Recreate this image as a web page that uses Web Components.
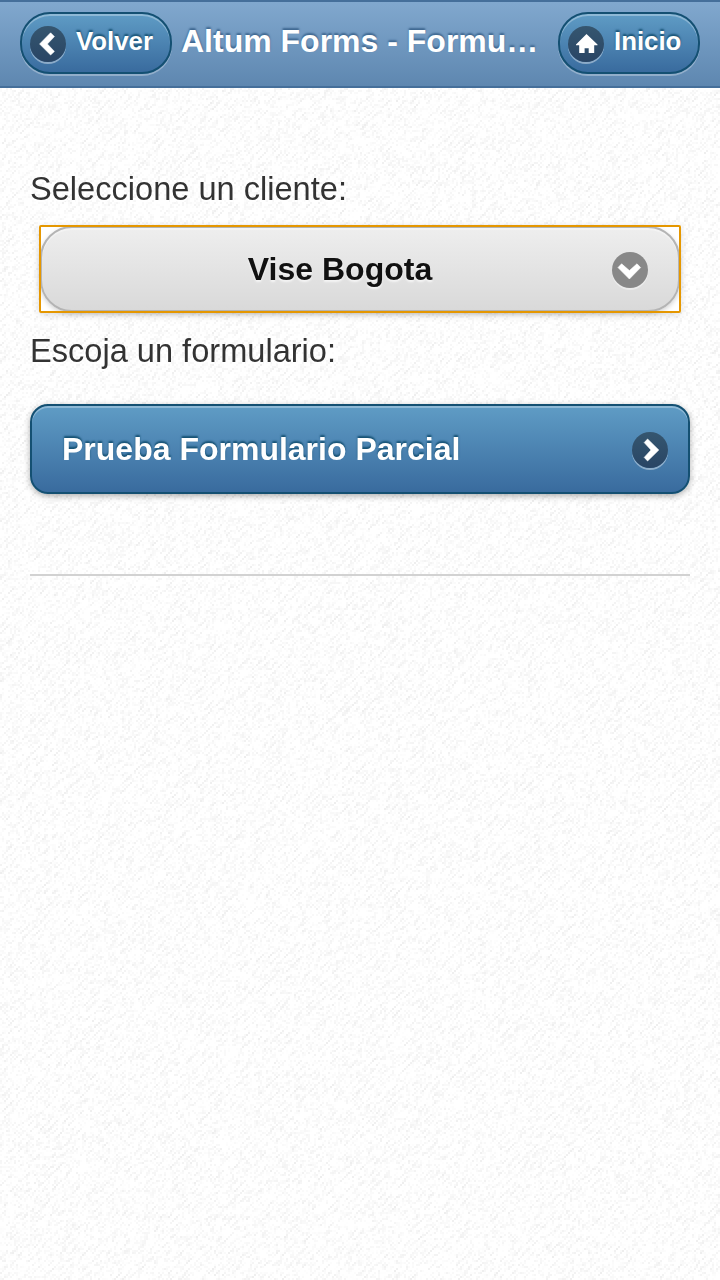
<!DOCTYPE html>
<html lang="es">
<head>
<meta charset="utf-8">
<title>Altum Forms</title>
<style>
html,body{margin:0;height:100%;overflow:hidden;background:#fdfdfd}
body{font-family:"Liberation Sans",Arial,sans-serif}
</style>
</head>
<body>
<paper-page>
  <title-bar slot="header">
    <nav-button slot="start" icon="left" style="width:152px">Volver</nav-button>
    Altum Forms - Formu…
    <nav-button slot="end" icon="home" style="width:142px">Inicio</nav-button>
  </title-bar>
  <field-label>Seleccione un cliente:</field-label>
  <select-button>Vise Bogota</select-button>
  <field-label>Escoja un formulario:</field-label>
  <list-link>Prueba Formulario Parcial</list-link>
  <rule-line></rule-line>
</paper-page>
<script>
const define = (name, html, ready) => {
  const t = document.createElement('template');
  t.innerHTML = html;
  customElements.define(name, class extends HTMLElement {
    constructor() {
      super();
      this.attachShadow({mode: 'open'}).append(t.content.cloneNode(true));
    }
    connectedCallback() { if (ready) ready(this); }
  });
};

const GLYPHS = {
  left: '<path d="M20.6 6.8 L24.4 10.6 L17.4 18 L24.4 25.4 L20.6 29 L9.6 18 Z" fill="#fff" stroke="#fff" stroke-width=".6" stroke-linejoin="round"/>',
  right: '<path d="M15.6 7 L12.2 10.6 L19 18 L12.2 25.4 L15.6 29 L26.8 18 Z" fill="#fff" stroke="#fff" stroke-width=".6" stroke-linejoin="round"/>',
  down: '<path d="M6 15.6 L9.6 11.8 L17.4 18.6 L25 11.8 L28.6 15.6 L17.4 27 Z" fill="#fff" stroke="#fff" stroke-width=".6" stroke-linejoin="round"/>',
  home: '<path d="M18.5 8 L29.5 18.6 V19.3 H26.2 V27 H20.7 V22.2 H16.6 V27 H11.2 V19.3 H8 V18.6 Z" fill="#fff"/>'
};

define('disc-icon', `
<style>
:host{display:block;flex:none;width:36px;height:36px;border-radius:50%;background:var(--disc,rgba(0,0,0,.4));box-shadow:0 2px 0 rgba(255,255,255,.4)}
svg{display:block}
</style>
<svg width="36" height="36" viewBox="0 0 36 36"></svg>`, el => {
  const name = el.getAttribute('name');
  if (name) el.shadowRoot.querySelector('svg').innerHTML = GLYPHS[name];
});

define('nav-button', `
<style>
:host{display:flex;box-sizing:border-box;height:62px;border:2px solid #145072;border-radius:30px;padding:10px 0 0 8px;
 background:linear-gradient(#5f9cc5,#396b9e);box-shadow:inset 0 2px 0 rgba(255,255,255,.3),0 2px 0 rgba(255,255,255,.3);
 color:#fff;font-size:25.8px;line-height:30px;font-weight:bold;text-shadow:0 -2px 2px #145072}
disc-icon{margin:2px 10px 0 0;--disc:linear-gradient(#35566f,#294565)}
span{padding-top:2px}
</style>
<disc-icon></disc-icon><span><slot></slot></span>`, el => {
  const i = el.shadowRoot.querySelector('disc-icon');
  i.setAttribute('name', el.getAttribute('icon'));
  i.shadowRoot.querySelector('svg').innerHTML = GLYPHS[el.getAttribute('icon')];
});

define('title-bar', `
<style>
:host{display:flex;box-sizing:border-box;height:88px;padding:10px 20px;border:solid #456f9a;border-width:2px 0;
 background:linear-gradient(#81a8ce,#5e87b0);align-items:flex-start}
h1{flex:1;margin:9px 0 0 9px;font-size:32px;line-height:40px;color:#fff;white-space:nowrap;text-shadow:0 -2px 2px #3e6790}
</style>
<slot name="start"></slot><h1><slot></slot></h1><slot name="end"></slot>`);

define('field-label', `
<style>:host{display:block;height:42px;line-height:42px;font-size:32.6px;color:#333;text-shadow:0 2px 0 #fff}</style>
<slot></slot>`);

define('select-button', `
<style>
:host{display:block;margin:16px 10px 18px;outline:2px solid #e59700;outline-offset:-1px;border-radius:1px;height:86px;background:#fff;
 box-shadow:0 2px 8px rgba(0,0,0,.17)}
div{box-sizing:border-box;height:86px;border:2px solid #b4b4b4;border-radius:32px;display:flex;align-items:center;padding:0 30px 0 0;
 background:linear-gradient(#eee,#d9d9d9);box-shadow:inset 0 2px 0 rgba(255,255,255,.35),0 2px 5px rgba(0,0,0,.18);color:#111;font-size:32px;font-weight:bold;text-shadow:0 2px 2px #f5f5f5}
span{flex:1;text-align:center;padding:1px 0 0 26px}
disc-icon{margin-top:2px;--disc:#888}
</style>
<div><span><slot></slot></span><disc-icon name="down"></disc-icon></div>`);

define('list-link', `
<style>
:host{display:flex;align-items:center;box-sizing:border-box;height:90px;margin-top:32px;padding:0 20px 0 30px;border:2px solid #145072;border-radius:18px;
 background:linear-gradient(#5f9cc5,#396b9e);box-shadow:inset 0 2px 0 rgba(255,255,255,.3),0 2px 6px rgba(0,0,0,.32);
 color:#fff;font-weight:bold;font-size:32px;text-shadow:0 -2px 2px #145072}
span{flex:1}
disc-icon{margin-top:2px;--disc:linear-gradient(#35566f,#294565)}
</style>
<span><slot></slot></span><disc-icon name="right"></disc-icon>`);

define('rule-line', `<style>:host{display:block;height:2px;margin-top:80px;background:#d2d2d2}</style>`);

define('paper-page', `
<style>
:host{display:grid;width:720px;height:1280px;grid-template:88px 1fr/720px;background:#fdfdfd}
canvas{grid-area:1/1/3/2;width:720px;height:1280px;image-rendering:pixelated}
header{grid-area:1/1;z-index:1}
main{grid-area:2/1;z-index:1;padding:80px 30px 0}
</style>
<canvas width="360" height="640"></canvas>
<header><slot name="header"></slot></header><main><slot></slot></main>`, el => {
  // Paper grain: random dots on a faint rising diagonal weave.
  const ctx = el.shadowRoot.querySelector('canvas').getContext('2d');
  const w = 360, h = 640, img = ctx.createImageData(w, h), noise = new Float32Array(w * h);
  let s = 9173;
  const rnd = () => {
    s = (s + 0x6D2B79F5) | 0;
    let t = Math.imul(s ^ (s >>> 15), 1 | s);
    t = (t + Math.imul(t ^ (t >>> 7), 61 | t)) ^ t;
    return ((t ^ (t >>> 14)) >>> 0) / 4294967296;
  };
  for (let i = 0; i < w * h; i++) noise[i] = rnd();
  for (let y = 0; y < h; y++) for (let x = 0; x < w; x++) {
    const at = (dx, dy) => noise[Math.min(h - 1, Math.max(0, y + dy)) * w + Math.min(w - 1, Math.max(0, x + dx))];
    const n = at(0, 0) * .76 + at(1, -1) * .24;
    const phase = (x + y) % 4 === 0 ? .16 : (x + y) % 4 === 2 ? -.12 : 0;
    const d = Math.max(0, n + phase - .5) * 27;
    const v = 255 - Math.min(17, d), i = (y * w + x) * 4;
    img.data[i] = img.data[i + 1] = img.data[i + 2] = v;
    img.data[i + 3] = 255;
  }
  ctx.putImageData(img, 0, 0);
});
</script>
</body>
</html>
